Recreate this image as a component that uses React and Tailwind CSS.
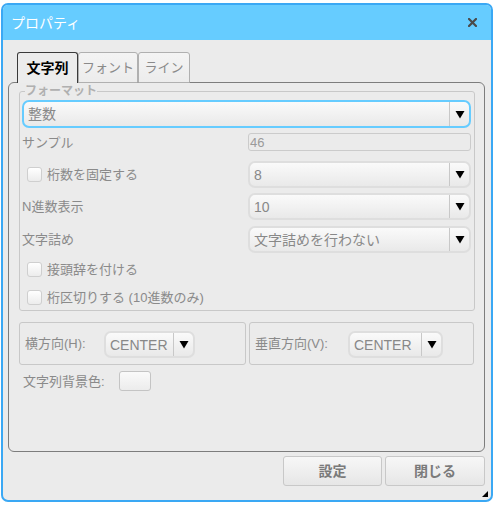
import React from 'react';

const FONT = { fontFamily: '"Liberation Sans", "Noto Sans CJK JP", sans-serif' };

function Arrow() {
  return (
    <svg width="10" height="9" viewBox="0 0 10 9">
      <path d="M0.5 1 L9.5 1 L5 8.5 Z" fill="#000" />
    </svg>
  );
}

function Select({ value, focused, className = '' }) {
  return (
    <div
      className={`flex items-stretch rounded-[7px] border-2 bg-gradient-to-b from-[#fafafa] to-[#e9e9e9] ${
        focused ? 'border-[#66ccff]' : 'border-[#dedede]'
      } ${className}`}
    >
      <div className="flex-1 flex items-center pl-[4px] text-[14px] leading-none text-[#888] truncate">{value}</div>
      <div className="w-[20px] border-l border-[#c8c8c8] flex items-center justify-center">
        <Arrow />
      </div>
    </div>
  );
}

function Check({ label }) {
  return (
    <div className="flex items-center h-[20px] pl-[5px]">
      <div className="w-[15px] h-[15px] rounded-[3px] border border-[#cfcfcf] bg-gradient-to-b from-white to-[#ececec]" />
      <span className="ml-[5px] text-[13px] leading-none text-[#8a8a8a] whitespace-nowrap">{label}</span>
    </div>
  );
}

export default function App() {
  return (
    <div className="w-[496px] h-[507px] bg-white pt-[3px] pl-[1px]" style={FONT}>
      <div className="relative w-[492px] h-[499px] rounded-[7px] border-2 border-[#3aa8f4] bg-[#ebebeb] flex flex-col overflow-hidden">
        {/* title bar */}
        <div className="h-[35px] bg-[#66ccff] flex items-center justify-between pl-[8px] pr-[14px]">
          <span className="text-[14px] text-white leading-none">プロパティ</span>
          <svg width="9" height="9" viewBox="0 0 9 9">
            <path d="M1 1 L8 8 M8 1 L1 8" stroke="#4a4a4a" strokeWidth="2.2" strokeLinecap="square" />
          </svg>
        </div>

        <div className="flex-1 flex flex-col pl-[5px] pr-[6px]">
          {/* tabs */}
          <div className="mt-[12px] flex pl-[9px] h-[31px] relative z-10 -mb-px">
            <div className="w-[61px] rounded-t-[3px] border border-b-0 border-[#3a3a3a] bg-[#ececec] flex items-center justify-center">
              <span className="text-[14px] font-bold text-black leading-none">文字列</span>
            </div>
            <div className="w-[60px] rounded-t-[3px] border border-[#b0b0b0] bg-gradient-to-b from-[#f4f4f4] to-[#ececec] flex items-center justify-center">
              <span className="text-[13px] text-[#8a8a8a] leading-none">フォント</span>
            </div>
            <div className="w-[52px] rounded-t-[3px] border border-[#b0b0b0] bg-gradient-to-b from-[#f4f4f4] to-[#ececec] flex items-center justify-center">
              <span className="text-[13px] text-[#8a8a8a] leading-none">ライン</span>
            </div>
          </div>

          {/* panel */}
          <div className="h-[370px] rounded-[6px] border border-[#7d7d7d] pl-[10px] pr-[9px] pt-[1px]">
            <fieldset className="border border-[#c8c8c8] rounded-[3px] pl-[2px] pr-[3px] pb-[3px]">
              <legend className="ml-[3px] text-[12px] leading-[14px] font-bold text-[#b0b0b0]">フォーマット</legend>
              <Select value="整数" focused className="h-[28px] mt-[2px]" />

              <div className="flex items-center h-[18px] mt-[5px]">
                <div className="w-[226px] text-[13px] leading-none text-[#8a8a8a]">サンプル</div>
                <div className="flex-1 h-full rounded-[3px] border border-[#cbcbcb] flex items-center pl-[1px] text-[13px] leading-none text-[#9a9a9a]">46</div>
              </div>

              <div className="flex items-center h-[27px] mt-[10px]">
                <div className="w-[226px]"><Check label="桁数を固定する" /></div>
                <Select value="8" className="flex-1 h-full" />
              </div>

              <div className="flex items-center h-[27px] mt-[5px]">
                <div className="w-[226px] text-[13px] leading-none text-[#8a8a8a]">N進数表示</div>
                <Select value="10" className="flex-1 h-full" />
              </div>

              <div className="flex items-center h-[27px] mt-[6px]">
                <div className="w-[226px] text-[13px] leading-none text-[#8a8a8a]">文字詰め</div>
                <Select value="文字詰めを行わない" className="flex-1 h-full" />
              </div>

              <div className="mt-[6px]"><Check label="接頭辞を付ける" /></div>
              <div className="mt-[8px]"><Check label="桁区切りする (10進数のみ)" /></div>
            </fieldset>

            <div className="flex gap-[3px] mt-[11px] pr-[1px]">
              <div className="w-[227px] h-[43px] rounded-[3px] border border-[#c8c8c8] flex items-center pl-[5px]">
                <span className="w-[79px] text-[13px] leading-none text-[#8a8a8a] whitespace-nowrap">横方向(H):</span>
                <Select value="CENTER" className="w-[91px] h-[27px] mt-[2px]" />
              </div>
              <div className="flex-1 h-[43px] rounded-[3px] border border-[#c8c8c8] flex items-center pl-[5px]">
                <span className="w-[93px] text-[13px] leading-none text-[#8a8a8a] whitespace-nowrap">垂直方向(V):</span>
                <Select value="CENTER" className="w-[95px] h-[27px] mt-[2px]" />
              </div>
            </div>

            <div className="flex items-center mt-[6px] pl-[4px] h-[20px]">
              <span className="w-[96px] text-[13px] leading-none text-[#8a8a8a] whitespace-nowrap">文字列背景色:</span>
              <div className="w-[32px] h-[20px] rounded-[3px] border border-[#c4c4c4] bg-gradient-to-b from-[#fafafa] to-[#ececec]" />
            </div>
          </div>

          {/* buttons */}
          <div className="flex justify-end gap-[3px] mt-[4px]">
            <button className="w-[99px] h-[30px] rounded-[3px] border border-[#c8c8c8] bg-gradient-to-b from-[#f7f7f7] to-[#e6e6e6] text-[14px] font-bold text-[#7a7a7a]">設定</button>
            <button className="w-[100px] h-[30px] rounded-[3px] border border-[#c8c8c8] bg-gradient-to-b from-[#f7f7f7] to-[#e6e6e6] text-[14px] font-bold text-[#7a7a7a]">閉じる</button>
          </div>
        </div>

        {/* resize grip */}
        <div className="absolute right-[3px] bottom-[3px] w-0 h-0 border-l-[6px] border-l-transparent border-b-[6px] border-b-black" />
      </div>
    </div>
  );
}
